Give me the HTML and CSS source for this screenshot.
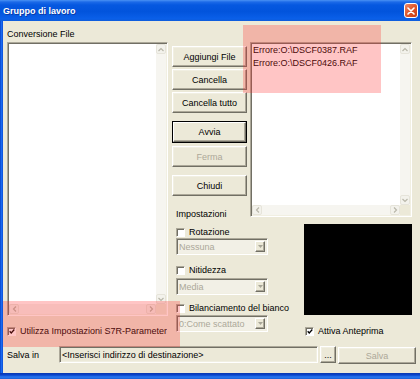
FILE: index.html
```html
<!DOCTYPE html>
<html>
<head>
<meta charset="utf-8">
<link rel="stylesheet" href="styles.css">
</head>
<body>
<div class="window">
  <div class="titlebar">
    <span class="title">Gruppo di lavoro</span>
    <span class="close"><svg width="8" height="8" viewBox="0 0 8 8"><path d="M1 1 L7 7 M7 1 L1 7" stroke="#fff" stroke-width="1.6" stroke-linecap="round"/></svg></span>
  </div>
  <div class="frame">
    <div class="frame-left"></div>
    <div class="client">
      <div class="label">Conversione File</div>
      <div class="main">
        <div class="left-col">
          <div class="listbox left-list">
            <div class="lb-area"></div>
            <div class="vscroll">
              <span class="sb-btn"><svg width="8" height="7" viewBox="0 0 8 7"><polyline points="1.5,5 4,2.5 6.5,5" fill="none" stroke="#b9b7aa" stroke-width="1.2"/></svg></span>
              <span class="sb-btn"><svg width="8" height="7" viewBox="0 0 8 7"><polyline points="1.5,2 4,4.5 6.5,2" fill="none" stroke="#b9b7aa" stroke-width="1.2"/></svg></span>
            </div>
            <div class="hscroll">
              <span class="sb-btn"><svg width="7" height="8" viewBox="0 0 7 8"><polyline points="5,1.5 2.5,4 5,6.5" fill="none" stroke="#b9b7aa" stroke-width="1.2"/></svg></span>
              <span class="sb-btn"><svg width="7" height="8" viewBox="0 0 7 8"><polyline points="2,1.5 4.5,4 2,6.5" fill="none" stroke="#b9b7aa" stroke-width="1.2"/></svg></span>
            </div>
            <div class="corner"></div>
          </div>
          <div class="chk s7r"><span class="box"><svg width="7" height="7" viewBox="0 0 7 7"><polyline points="0.8,3.2 2.6,5.2 6.2,1.2" fill="none" stroke="#000" stroke-width="1.5"/></svg></span><span class="clip">Utilizza Impostazioni S7R-Parameter</span></div>
        </div>
        <div class="work">
          <div class="work-top">
            <div class="btn-col">
              <div class="btn">Aggiungi File</div>
              <div class="btn">Cancella</div>
              <div class="btn">Cancella tutto</div>
              <div class="btn default gap8"><span class="btn-in">Avvia</span></div>
              <div class="btn disabled gap3">Ferma</div>
              <div class="btn gap8">Chiudi</div>
              <div class="label imp">Impostazioni</div>
            </div>
            <div class="listbox right-list">
              <div class="lb-area lines">
                <div>Errore:O:\DSCF0387.RAF</div>
                <div>Errore:O:\DSCF0426.RAF</div>
              </div>
              <div class="vscroll">
                <span class="sb-btn"><svg width="8" height="7" viewBox="0 0 8 7"><polyline points="1.5,5 4,2.5 6.5,5" fill="none" stroke="#b9b7aa" stroke-width="1.2"/></svg></span>
                <span class="sb-btn"><svg width="8" height="7" viewBox="0 0 8 7"><polyline points="1.5,2 4,4.5 6.5,2" fill="none" stroke="#b9b7aa" stroke-width="1.2"/></svg></span>
              </div>
              <div class="hscroll">
                <span class="sb-btn"><svg width="7" height="8" viewBox="0 0 7 8"><polyline points="5,1.5 2.5,4 5,6.5" fill="none" stroke="#b9b7aa" stroke-width="1.2"/></svg></span>
                <span class="sb-btn"><svg width="7" height="8" viewBox="0 0 7 8"><polyline points="2,1.5 4.5,4 2,6.5" fill="none" stroke="#b9b7aa" stroke-width="1.2"/></svg></span>
              </div>
              <div class="corner"></div>
            </div>
          </div>
          <div class="work-bottom">
            <div class="settings">
              <div class="chk row1"><span class="box empty"></span><span>Rotazione</span></div>
              <div class="combo"><span class="combo-text">Nessuna</span><span class="drop"><svg width="5" height="3" viewBox="0 0 5 3"><polygon points="0,0 5,0 2.5,3" fill="#a8a698"/></svg></span></div>
              <div class="chk row2"><span class="box empty"></span><span>Nitidezza</span></div>
              <div class="combo c2"><span class="combo-text">Media</span><span class="drop"><svg width="5" height="3" viewBox="0 0 5 3"><polygon points="0,0 5,0 2.5,3" fill="#a8a698"/></svg></span></div>
              <div class="chk row3"><span class="box empty"></span><span>Bilanciamento del bianco</span></div>
              <div class="combo c3"><span class="combo-text">0:Come scattato</span><span class="drop"><svg width="5" height="3" viewBox="0 0 5 3"><polygon points="0,0 5,0 2.5,3" fill="#a8a698"/></svg></span></div>
            </div>
            <div class="preview-col">
              <div class="preview"></div>
              <div class="chk att"><span class="box"><svg width="7" height="7" viewBox="0 0 7 7"><polyline points="0.8,3.2 2.6,5.2 6.2,1.2" fill="none" stroke="#000" stroke-width="1.5"/></svg></span><span>Attiva Anteprima</span></div>
            </div>
          </div>
        </div>
      </div>
      <div class="save-row">
        <span class="save-label">Salva in</span>
        <span class="field">&lt;Inserisci indirizzo di destinazione&gt;</span>
        <span class="btn small">...</span>
        <span class="btn disabled save">Salva</span>
      </div>
    </div>
  </div>
  <div class="frame-bottom"></div>
  <div class="mark mark-top"></div>
  <div class="mark mark-bottom"></div>
</div>
</body>
</html>
```
FILE: styles.css
```css
* { box-sizing: border-box; }
body {
  margin: 0;
  font-family: "Liberation Sans", Arial, sans-serif;
  font-size: 9px;
  color: #000;
  background: #ECE9D8;
}
.window {
  width: 420px;
  height: 379px;
  display: flex;
  flex-direction: column;
  position: relative;
  overflow: hidden;
  background: #ECE9D8;
}
.titlebar {
  height: 21px;
  flex: none;
  display: flex;
  align-items: center;
  padding-left: 3px;
  color: #fff;
  font-weight: bold;
  background: linear-gradient(to bottom, #4a92f4 0, #1c6ae8 2px, #0658e0 5px, #0254dc 55%, #0a5fe8 88%, #0e5ddc 100%);
}
.title { line-height: 21px; padding-top: 1px; text-shadow: 1px 1px 0 #0a3aa8; }
.close {
  margin-left: auto;
  margin-right: 2px;
  width: 14px;
  height: 15px;
  border: 1px solid #fff;
  border-radius: 3px;
  background: linear-gradient(135deg, #f08a68 0%, #e05a30 45%, #c83c14 100%);
  display: flex;
  align-items: center;
  justify-content: center;
}
.frame { flex: 1; display: flex; min-height: 0; }
.frame-left {
  width: 3px;
  flex: none;
  background: linear-gradient(to right, #0841c8, #1a6af0 50%, #0a4cd6);
}
.client {
  flex: 1;
  display: flex;
  flex-direction: column;
  padding: 8px 0 0 4px;
}
.label { height: 11px; line-height: 11px; white-space: nowrap; }
.main { display: flex; gap: 4px; margin-top: 2px; height: 296px; }
.left-col { width: 161px; display: flex; flex-direction: column; }

.listbox {
  border: 1px solid;
  border-color: #ACA899 #fff #fff #ACA899;
  padding: 1px;
  box-shadow: inset 1px 1px #716F64, inset -1px -1px #F1EFE2;
  background: #fff;
  display: grid;
  grid-template-columns: 1fr 10px;
  grid-template-rows: 1fr 10px;
}
.left-list { height: 274px; }
.right-list { width: 162px; height: 175px; }
.lb-area { background: #fff; }
.lines { padding: 0 0 0 1px; line-height: 13px; white-space: nowrap; overflow: hidden; }
.vscroll {
  background: #F6F5F0;
  display: flex;
  flex-direction: column;
  justify-content: space-between;
}
.hscroll {
  background: #F6F5F0;
  display: flex;
  justify-content: space-between;
}
.corner { background: #ECE9D8; }
.sb-btn {
  width: 10px;
  height: 10px;
  border: 1px solid #E6E4DA;
  border-radius: 2px;
  background: #F3F2EC;
  display: flex;
  align-items: center;
  justify-content: center;
}

.chk { display: flex; align-items: center; gap: 4px; height: 12px; line-height: 12px; white-space: nowrap; }
.box {
  width: 9px;
  height: 9px;
  flex: none;
  border: 1px solid;
  border-color: #ACA899 #fff #fff #ACA899;
  box-shadow: inset 1px 1px #716F64;
  background: #fff;
  display: flex;
  align-items: center;
  justify-content: center;
  padding: 1px 0 0 1px;
}
.s7r { margin-top: 9px; width: 161px; overflow: hidden; }
.clip { overflow: hidden; }

.work { width: 240px; display: flex; flex-direction: column; }
.work-top { display: flex; align-items: flex-start; gap: 3px; }
.btn-col { width: 75px; flex: none; display: flex; flex-direction: column; padding-top: 4px; }
.btn {
  height: 21px;
  display: flex;
  align-items: center;
  justify-content: center;
  white-space: nowrap;
  border: 1px solid;
  border-color: #fff #716F64 #716F64 #fff;
  box-shadow: inset -1px -1px #ACA899, inset 1px 1px #F1EFE2;
  background: #ECE9D8;
}
.btn + .btn { margin-top: 2px; }
.btn.gap8 { margin-top: 8px; }
.btn.gap3 { margin-top: 3px; }
.btn.default {
  height: 22px;
  border: 1px solid #000;
  box-shadow: none;
  padding: 0;
}
.btn-in {
  flex: 1;
  align-self: stretch;
  display: flex;
  align-items: center;
  justify-content: center;
  border: 1px solid;
  border-color: #fff #716F64 #716F64 #fff;
  box-shadow: inset -1px -1px #ACA899;
}
.btn.disabled { color: #ACA899; }
.imp { margin-top: 13px; padding-left: 4px; }

.work-bottom { display: flex; }
.settings { width: 132px; padding-left: 4px; display: flex; flex-direction: column; }
.row1 { margin-top: 6px; }
.row2 { margin-top: 9px; }
.row3 { margin-top: 7px; }
.combo {
  width: 92px;
  height: 17px;
  border: 1px solid;
  border-color: #ACA899 #fff #fff #ACA899;
  padding: 1px;
  box-shadow: inset 1px 1px #716F64, inset -1px -1px #F1EFE2;
  background: #F2F0E6;
  display: flex;
  align-items: center;
}
.c2 { margin-top: 2px; }
.c3 { margin-top: 1px; }
.combo-text { flex: 1; padding-left: 1px; color: #ACA899; white-space: nowrap; }
.drop {
  width: 10px;
  height: 11px;
  margin-right: 1px;
  border: 1px solid;
  border-color: #fff #716F64 #716F64 #fff;
  box-shadow: inset -1px -1px #ACA899;
  background: #ECE9D8;
  display: flex;
  align-items: center;
  justify-content: center;
}
.preview-col { width: 108px; display: flex; flex-direction: column; }
.preview { height: 91px; margin-top: 4px; background: #000; }
.att { margin-top: 10px; padding-left: 1px; }

.save-row { display: flex; align-items: center; height: 17px; margin-top: 8px; }
.save-label { width: 52px; flex: none; }
.field {
  width: 259px;
  height: 17px;
  flex: none;
  display: flex;
  align-items: center;
  padding-left: 2px;
  white-space: nowrap;
  border: 1px solid;
  border-color: #ACA899 #fff #fff #ACA899;
  box-shadow: inset 1px 1px #716F64, inset -1px -1px #F1EFE2;
  background: #ECE9D8;
}
.save-row .btn { height: 17px; }
.btn.small { width: 16px; margin-left: 2px; }
.btn.save { width: 78px; margin-left: 2px; }

.frame-bottom {
  height: 6px;
  flex: none;
  background: linear-gradient(to bottom, #0a38b0 0, #0a44cc 2px, #2a78f0 4px, #1a5ed8 6px);
}
.mark {
  position: absolute;
  background: rgba(255, 40, 40, 0.27);
  pointer-events: none;
}
.mark-top { left: 243px; top: 25px; width: 138px; height: 68px; }
.mark-bottom { left: 3px; top: 301px; width: 177px; height: 46px; }
```
